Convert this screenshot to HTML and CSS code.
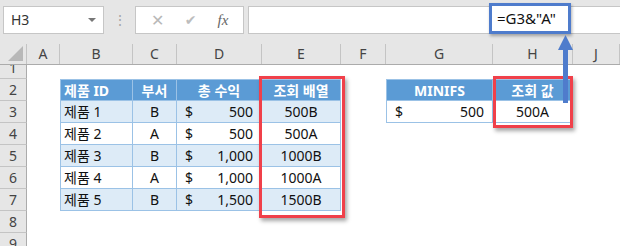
FILE: index.html
```html
<!DOCTYPE html>
<html lang="ko">
<head>
    <meta charset="UTF-8">
    <title>MINIFS 조회</title>
    <link rel="stylesheet" href="styles.css">
</head>
<body>
<div class="stage">
    <!-- 수식 입력줄 -->
    <div class="toolbar">
        <div class="namebox">H3<span class="drop"></span></div>
        <div class="dots">⋮</div>
        <div class="fxbox">
            <span class="ico">✕</span>
            <span class="ico check">✔</span>
            <span class="fx">fx</span>
        </div>
        <div class="formula"></div>
    </div>

    <div class="sheet">
        <div class="row hdr">
            <div class="corner"><span class="tri"></span></div>
            <div>A</div><div>B</div><div>C</div><div>D</div><div>E</div>
            <div>F</div><div>G</div><div>H</div><div>J</div>
        </div>
        <div class="row r1">
            <div class="rh"><span>1</span></div>
            <div></div><div></div><div></div><div></div><div></div>
            <div></div><div></div><div></div><div></div>
        </div>
        <div class="row">
            <div class="rh">2</div><div></div>
            <div class="th first left">제품 ID</div>
            <div class="th">부서</div>
            <div class="th">총 수익</div>
            <div class="th">조회 배열</div>
            <div></div>
            <div class="th first">MINIFS</div>
            <div class="th">조회 값</div>
            <div></div>
        </div>
        <div class="row">
            <div class="rh">3</div><div></div>
            <div class="td band first left">제품 1</div>
            <div class="td band">B</div>
            <div class="td band acc"><span>$</span><span>500</span></div>
            <div class="td band">500B</div>
            <div></div>
            <div class="td first acc"><span>$</span><span>500</span></div>
            <div class="td">500A</div>
            <div></div>
        </div>
        <div class="row">
            <div class="rh">4</div><div></div>
            <div class="td first left">제품 2</div>
            <div class="td">A</div>
            <div class="td acc"><span>$</span><span>500</span></div>
            <div class="td">500A</div>
            <div></div><div></div><div></div><div></div>
        </div>
        <div class="row">
            <div class="rh">5</div><div></div>
            <div class="td band first left">제품 3</div>
            <div class="td band">B</div>
            <div class="td band acc"><span>$</span><span>1,000</span></div>
            <div class="td band">1000B</div>
            <div></div><div></div><div></div><div></div>
        </div>
        <div class="row">
            <div class="rh">6</div><div></div>
            <div class="td first left">제품 4</div>
            <div class="td">A</div>
            <div class="td acc"><span>$</span><span>1,000</span></div>
            <div class="td">1000A</div>
            <div></div><div></div><div></div><div></div>
        </div>
        <div class="row">
            <div class="rh">7</div><div></div>
            <div class="td band first left">제품 5</div>
            <div class="td band">B</div>
            <div class="td band acc"><span>$</span><span>1,500</span></div>
            <div class="td band">1500B</div>
            <div></div><div></div><div></div><div></div>
        </div>
        <div class="row">
            <div class="rh">8</div>
            <div></div><div></div><div></div><div></div><div></div>
            <div></div><div></div><div></div><div></div>
        </div>
        <div class="row">
            <div class="rh">9</div>
            <div></div><div></div><div></div><div></div><div></div>
            <div></div><div></div><div></div><div></div>
        </div>
    </div>

    <!-- 강조 표시 -->
    <div class="callout">=G3&amp;"A"</div>
    <div class="mark mark-e"></div>
    <div class="mark mark-h"></div>
    <svg class="arrow" width="20" height="70" viewBox="0 0 20 70">
        <rect x="6" y="12" width="5" height="56" fill="#4f7ccc"/>
        <polygon points="1,15 8.5,0 16,15" fill="#4f7ccc"/>
    </svg>
</div>
</body>
</html>
```

FILE: styles.css
```css
body {
    margin: 0;
    font-family: "Noto Sans", "Noto Sans CJK KR", sans-serif;
    background: #ffffff;
}

.stage {
    position: relative;
    width: 620px;
    height: 246px;
    overflow: hidden;
}

.toolbar {
    height: 44px;
    background: #e6e6e6;
    display: flex;
    align-items: flex-start;
    padding-top: 6px;
    box-sizing: border-box;
}

.namebox {
    position: relative;
    margin-left: 3px;
    width: 101px;
    height: 28px;
    box-sizing: border-box;
    background: #fff;
    border: 1px solid #c6c6c6;
    font-size: 14px;
    line-height: 26px;
    padding-left: 7px;
    color: #333;
}

.drop {
    position: absolute;
    right: 7px;
    top: 11px;
    border-left: 4px solid transparent;
    border-right: 4px solid transparent;
    border-top: 4px solid #777;
}

.dots {
    width: 31px;
    text-align: center;
    color: #a6a6a6;
    font-size: 14px;
    line-height: 28px;
}

.fxbox {
    width: 109px;
    height: 28px;
    box-sizing: border-box;
    background: #fff;
    border: 1px solid #c6c6c6;
    display: flex;
    align-items: center;
    justify-content: space-around;
    padding: 0 4px;
}

.ico {
    color: #b8b8b8;
    font-size: 16px;
}

.check {
    font-family: "DejaVu Sans", sans-serif;
    font-size: 14px;
    color: #bdbdbd;
}

.fx {
    font-family: "Liberation Serif", serif;
    font-style: italic;
    font-size: 15px;
    color: #666;
}

.formula {
    margin-left: 4px;
    flex: 1;
    height: 28px;
    box-sizing: border-box;
    background: #fff;
    border: 1px solid #c6c6c6;
    border-right: none;
}

.row {
    display: grid;
    grid-template-columns: 27px 33px 73px 44px 85px 79px 45px 107px 80px 47px;
    height: 22px;
}

.row > div {
    box-sizing: border-box;
    font-size: 14px;
    line-height: 21px;
    white-space: nowrap;
    overflow: hidden;
}

.hdr {
    height: 21px;
    background: #e6e6e6;
    border-bottom: 1px solid #ababab;
    box-sizing: border-box;
}

.hdr > div {
    text-align: center;
    color: #444;
    border-right: 1px solid #c4c4c4;
    line-height: 20px;
    font-size: 14px;
}

.corner {
    position: relative;
}

.tri {
    position: absolute;
    right: 3px;
    bottom: 3px;
    border-left: 15px solid transparent;
    border-bottom: 15px solid #b8b8b8;
}

.rh {
    background: #e6e6e6;
    color: #444;
    text-align: center;
    border-right: 1px solid #ababab;
    border-bottom: 1px solid #c4c4c4;
}

.r1 {
    height: 14px;
}

.r1 .rh span {
    display: block;
    margin-top: -8px;
}

.th {
    background: #5b9bd5;
    color: #fff;
    font-weight: bold;
    text-align: center;
    border-top: 1px solid #9bc2e6;
    border-right: 1px solid #9bc2e6;
    border-bottom: 1px solid #9bc2e6;
}

.td {
    text-align: center;
    color: #111;
    border-right: 1px solid #9bc2e6;
    border-bottom: 1px solid #9bc2e6;
}

.band {
    background: #ddebf7;
}

.first {
    border-left: 1px solid #9bc2e6;
}

.left {
    text-align: left;
    padding-left: 3px;
}

.acc {
    display: flex;
    justify-content: space-between;
    padding: 0 8px 0 8px;
}

.callout {
    position: absolute;
    left: 489px;
    top: 3px;
    width: 82px;
    height: 31px;
    box-sizing: border-box;
    border: 3px solid #4f7ccc;
    background: #fff;
    font-size: 15px;
    line-height: 25px;
    padding-left: 5px;
    color: #111;
    box-shadow: 1px 2px 3px rgba(0, 0, 0, 0.3);
}

.mark {
    position: absolute;
    box-sizing: border-box;
    border: 3px solid #f0404a;
    box-shadow: 2px 3px 4px rgba(0, 0, 0, 0.35);
}

.mark-e {
    left: 259px;
    top: 76px;
    width: 86px;
    height: 142px;
}

.mark-h {
    left: 493px;
    top: 76px;
    width: 80px;
    height: 52px;
}

.arrow {
    position: absolute;
    left: 557px;
    top: 35px;
}
```
